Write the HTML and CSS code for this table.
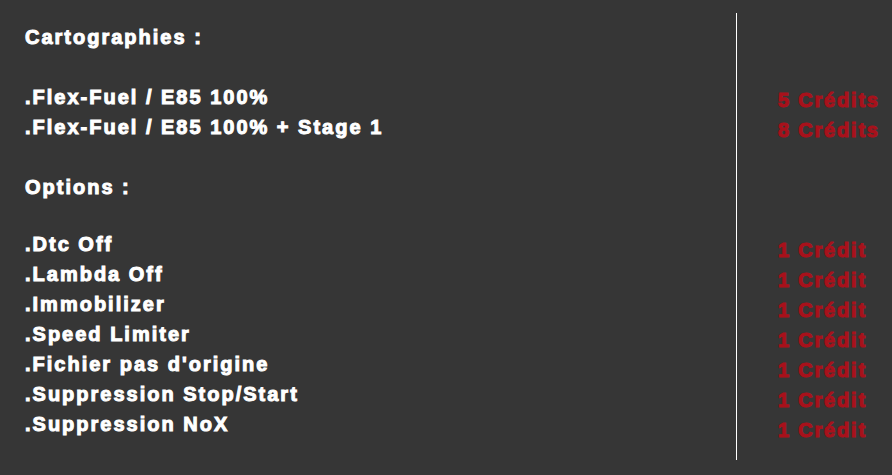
FILE: index.html
```html
<!DOCTYPE html>
<html lang="fr">
<head>
<meta charset="utf-8">
<title>Tarifs</title>
<link rel="stylesheet" href="styles.css">
</head>
<body>
<div class="panel">
  <div class="services">
    <p class="line">Cartographies :</p>
    <p class="line blank"></p>
    <p class="line">.Flex-Fuel / E85 100%</p>
    <p class="line">.Flex-Fuel / E85 100% + Stage 1</p>
    <p class="line blank"></p>
    <p class="line">Options :</p>
    <p class="line blank short"></p>
    <p class="line">.Dtc Off</p>
    <p class="line">.Lambda Off</p>
    <p class="line">.Immobilizer</p>
    <p class="line">.Speed Limiter</p>
    <p class="line">.Fichier pas d'origine</p>
    <p class="line">.Suppression Stop/Start</p>
    <p class="line">.Suppression NoX</p>
  </div>
  <div class="prices">
    <p class="line blank"></p>
    <p class="line blank"></p>
    <p class="line price">5 Crédits</p>
    <p class="line price">8 Crédits</p>
    <p class="line blank"></p>
    <p class="line blank"></p>
    <p class="line blank"></p>
    <p class="line price">1 Crédit</p>
    <p class="line price">1 Crédit</p>
    <p class="line price">1 Crédit</p>
    <p class="line price">1 Crédit</p>
    <p class="line price">1 Crédit</p>
    <p class="line price">1 Crédit</p>
    <p class="line price">1 Crédit</p>
  </div>
</div>
</body>
</html>
```

FILE: styles.css
```css
html, body {
  margin: 0;
  padding: 0;
  background: #363636;
}

body {
  width: 892px;
  height: 475px;
  overflow: hidden;
  font-family: "Liberation Sans", Arial, sans-serif;
  font-weight: bold;
  font-size: 20px;
  letter-spacing: 2px;
  color: #ffffff;
  -webkit-text-stroke: 1px currentColor;
}

.panel {
  display: flex;
  align-items: flex-start;
  padding-top: 13px;
}

.services {
  width: 711px;
  padding-left: 25px;
  padding-top: 9px;
}

.prices {
  border-left: 1px solid #ffffff;
  padding-left: 41px;
  padding-top: 12px;
  padding-bottom: 15px;
  height: 420px;
  -webkit-text-stroke: 0;
}

.line {
  margin: 0;
  height: 30px;
  line-height: 30px;
  white-space: nowrap;
}

.line.short {
  height: 27px;
}

.price {
  color: #a8111b;
  letter-spacing: 1.8px;
  -webkit-text-stroke: 1.1px currentColor;
}
```
